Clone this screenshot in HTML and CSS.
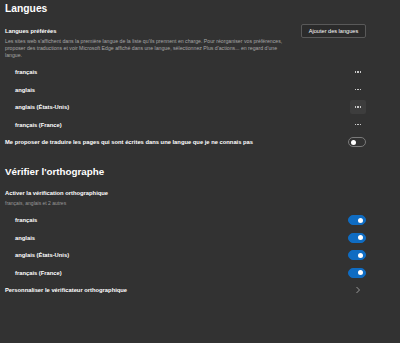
FILE: index.html
```html
<!DOCTYPE html>
<html lang="fr">
<head>
  <meta charset="UTF-8" />
  <meta name="viewport" content="width=device-width, initial-scale=1.0"/>
  <title>Paramètres - Langues</title>
  <link rel="stylesheet" href="styles.css">
</head>
<body>
  <div class="page">
    <h2 class="titre">Langues</h2>

    <div class="pref">
      <div class="pref-info">
        <div class="label">Langues préférées</div>
        <p class="desc">Les sites web s'affichent dans la première langue de la liste qu'ils prennent en charge. Pour réorganiser vos préférences, proposer des traductions et voir Microsoft Edge affiché dans une langue, sélectionnez Plus d'actions... en regard d'une langue.</p>
      </div>
      <button class="btn">Ajouter des langues</button>
    </div>

    <ul class="liste">
      <li class="item"><span>français</span><span class="plus"><i></i><i></i><i></i></span></li>
      <li class="item"><span>anglais</span><span class="plus"><i></i><i></i><i></i></span></li>
      <li class="item"><span>anglais (États-Unis)</span><span class="plus survol"><i></i><i></i><i></i></span></li>
      <li class="item"><span>français (France)</span><span class="plus"><i></i><i></i><i></i></span></li>
    </ul>

    <div class="ligne">
      <span class="label">Me proposer de traduire les pages qui sont écrites dans une langue que je ne connais pas</span>
      <span class="toggle"></span>
    </div>

    <h2 class="titre titre-2">Vérifier l'orthographe</h2>

    <div class="label label-2">Activer la vérification orthographique</div>
    <div class="sous">français, anglais et 2 autres</div>

    <ul class="liste">
      <li class="item"><span>français</span><span class="toggle on"></span></li>
      <li class="item"><span>anglais</span><span class="toggle on"></span></li>
      <li class="item"><span>anglais (États-Unis)</span><span class="toggle on"></span></li>
      <li class="item"><span>français (France)</span><span class="toggle on"></span></li>
    </ul>

    <div class="ligne">
      <span class="label">Personnaliser le vérificateur orthographique</span>
      <svg class="chevron" width="6" height="8" viewBox="0 0 6 8"><path d="M1.5 1 L4.5 4 L1.5 7" fill="none" stroke="#9a9a9a" stroke-width="1"/></svg>
    </div>
  </div>
</body>
</html>
```

FILE: styles.css
```css
body {
  margin: 0;
  background-color: #323232;
  color: #ffffff;
  font-family: 'Liberation Sans', Arial, sans-serif;
}
.page {
  width: 361px;
  padding: 0 34px 0 5px;
}
.titre {
  margin: 0;
  font-size: 10.3px;
  line-height: 18px;
  font-weight: bold;
}
.titre-2 {
  margin-top: 12.25px;
  font-size: 9.8px;
}
.label {
  font-size: 5.8px;
  font-weight: bold;
  line-height: 10px;
}
.label-2 {
  margin-top: 7px;
}

/* Langues préférées */
.pref {
  display: flex;
  justify-content: space-between;
  align-items: flex-start;
}
.pref-info {
  padding-top: 8px;
  width: 284px;
}
.desc {
  margin: 1.5px 0 0 0;
  font-size: 5.2px;
  line-height: 7px;
  color: #a6a6a6;
}
.btn {
  margin-top: 6px;
  height: 14px;
  width: 65px;
  padding: 0;
  background-color: #2b2b2b;
  border: 1px solid #595959;
  border-radius: 2px;
  color: #ffffff;
  font-family: 'Liberation Sans', Arial, sans-serif;
  font-size: 5.6px;
}

/* Listes */
.liste {
  list-style: none;
  margin: 4.75px 0 0 0;
  padding: 0;
}
.item {
  display: flex;
  justify-content: space-between;
  align-items: center;
  height: 17.5px;
  padding-left: 10px;
  font-size: 5.8px;
  font-weight: bold;
}
.plus {
  display: flex;
  align-items: center;
  justify-content: center;
  gap: 1.3px;
  width: 16px;
  height: 14px;
  border-radius: 2px;
}
.plus i {
  width: 1.3px;
  height: 1.3px;
  background-color: #c8c8c8;
}
.plus.survol {
  background-color: #3d3d3d;
}
.ligne {
  display: flex;
  justify-content: space-between;
  align-items: center;
  height: 17.5px;
}
.sous {
  margin-top: 1.5px;
  font-size: 5px;
  line-height: 7px;
  color: #9a9a9a;
}

/* Interrupteurs */
.toggle {
  position: relative;
  box-sizing: border-box;
  width: 18px;
  height: 10px;
  border: 1px solid #7a7a7a;
  border-radius: 5px;
}
.toggle::after {
  content: '';
  position: absolute;
  top: 1.5px;
  left: 2px;
  width: 5px;
  height: 5px;
  border-radius: 50%;
  background-color: #ffffff;
}
.toggle.on {
  background-color: #0f6cc2;
  border-color: #0f6cc2;
}
.toggle.on::after {
  left: auto;
  right: 2px;
}
.chevron {
  margin-right: 5px;
}
```
